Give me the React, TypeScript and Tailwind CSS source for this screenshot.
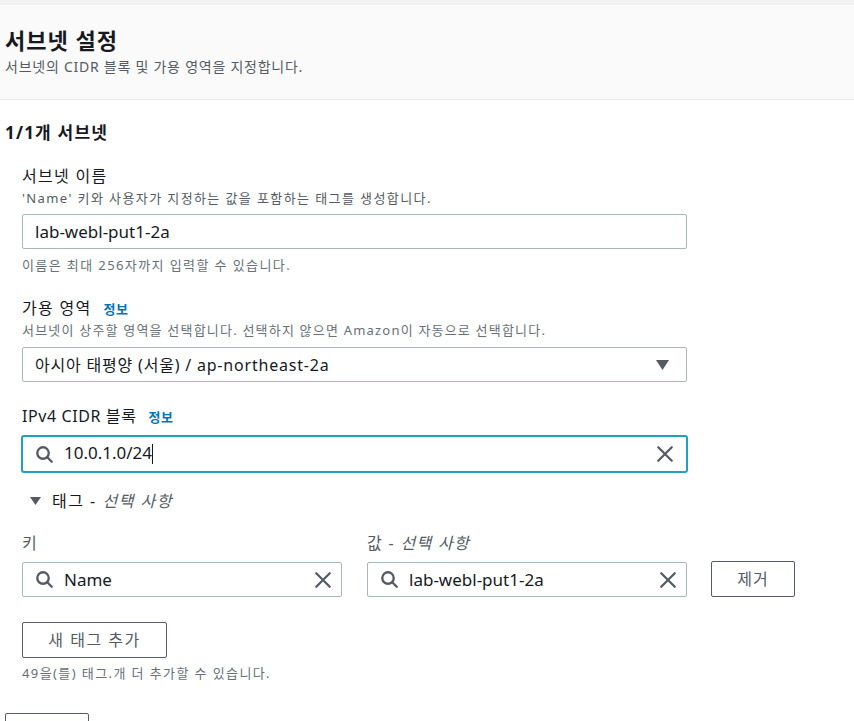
import React, { useState } from 'react';

const font = { fontFamily: '"Noto Sans", "Noto Sans CJK KR", sans-serif' };

function SearchIcon() {
  return (
    <svg width="17" height="17" viewBox="0 0 16 16" fill="none" stroke="#545b64" strokeWidth="2.2" strokeLinecap="round">
      <circle cx="6.6" cy="6.6" r="5.4" />
      <path d="M10.6 10.6 L14.8 14.8" />
    </svg>
  );
}

function ClearIcon() {
  return (
    <svg width="18" height="18" viewBox="0 0 16 16" fill="none" stroke="#545b64" strokeWidth="2" strokeLinecap="round">
      <path d="M2 2 L14 14 M14 2 L2 14" />
    </svg>
  );
}

function InfoLink() {
  return <span className="ml-[12px] text-[13px] tracking-[0.5px] font-bold text-[#0073bb]">정보</span>;
}

function SearchInput({ value, focused = false, className = '' }: { value: string; focused?: boolean; className?: string }) {
  return (
    <div
      className={`flex items-center bg-white ${
        focused
          ? 'rounded-[3px] border-2 border-[#1ea1c7] h-[38px] pl-[13px] pr-[12px]'
          : 'rounded-[2px] border border-[#aab7b8] h-[35px] pl-[13px] pr-[9px]'
      } ${className}`}
    >
      <SearchIcon />
      <span className="ml-[11px] flex-1 text-[17px] text-[#16191f] leading-none">
        {value}
        {focused && <span className="inline-block w-px h-[20px] align-middle bg-[#16191f]" />}
      </span>
      <ClearIcon />
    </div>
  );
}

export default function App() {
  const [tags] = useState([{ key: 'Name', value: 'lab-webl-put1-2a' }]);

  return (
    <div className="min-h-[721px] bg-white text-[#16191f]" style={font}>
      <div className="h-[5px] bg-[#f2f2f2]" />

      {/* Section header */}
      <div className="bg-[#fafafa] border-b border-[#e4e6e6] h-[95px] pl-[5px] pt-[21px]">
        <h1 className="text-[22px] tracking-[1px] font-bold leading-[28px]">서브넷 설정</h1>
        <p className="text-[14px] tracking-[0.75px] text-[#545b64] leading-[20px] mt-[3px]">서브넷의 CIDR 블록 및 가용 영역을 지정합니다.</p>
      </div>

      <div className="pl-[5px] pt-[21px]">
        <h2 className="text-[17px] tracking-[1.2px] font-bold leading-[24px]">1/1개 서브넷</h2>

        <div className="pl-[17px]">
          {/* Subnet name */}
          <div className="mt-[20px] w-[665px]">
            <div className="text-[16px] tracking-[1.3px] leading-[22px]">서브넷 이름</div>
            <div className="text-[13px] tracking-[1.4px] text-[#545b64] leading-[18px] mt-[2px]">'Name' 키와 사용자가 지정하는 값을 포함하는 태그를 생성합니다.</div>
            <div className="mt-[7px] h-[35px] border border-[#aab7b8] rounded-[2px] flex items-center pl-[12px] text-[17px]">lab-webl-put1-2a</div>
            <div className="text-[13px] tracking-[1.4px] text-[#687078] leading-[18px] mt-[7px]">이름은 최대 256자까지 입력할 수 있습니다.</div>
          </div>

          {/* Availability zone */}
          <div className="mt-[23px] w-[665px]">
            <div className="text-[16px] tracking-[1.3px] leading-[22px] flex items-baseline">가용 영역<InfoLink /></div>
            <div className="text-[13px] tracking-[1.2px] text-[#687078] leading-[18px] mt-[1px]">서브넷이 상주할 영역을 선택합니다. 선택하지 않으면 Amazon이 자동으로 선택합니다.</div>
            <div className="mt-[8px] h-[35px] border border-[#aab7b8] rounded-[2px] flex items-center pl-[12px] pr-[17px]">
              <span className="flex-1 text-[16px] tracking-[0.8px]">아시아 태평양 (서울) / ap-northeast-2a</span>
              <svg width="13" height="10" viewBox="0 0 13 10">
                <path d="M0 0 H13 L6.5 10 Z" fill="#545b64" />
              </svg>
            </div>
          </div>

          {/* CIDR block */}
          <div className="mt-[23px] w-[665px]">
            <div className="text-[16px] tracking-[0.6px] leading-[22px] flex items-baseline">IPv4 CIDR 블록<InfoLink /></div>
            <SearchInput value="10.0.1.0/24" focused className="mt-[7px] -mx-px" />
          </div>

          {/* Tags */}
          <div className="mt-[17px] flex items-center pl-[8px] text-[16px] tracking-[1.5px] leading-[22px]">
            <svg width="11" height="8" viewBox="0 0 11 8" className="mr-[11px]">
              <path d="M0 0 H11 L5.5 8 Z" fill="#545b64" />
            </svg>
            <span>
              태그 - <i className="text-[#545b64]">선택 사항</i>
            </span>
          </div>

          <div className="mt-[20px]">
            {tags.map((t) => (
              <div key={t.key} className="flex">
                <div className="w-[320px] shrink-0">
                  <div className="text-[16px] leading-[22px] text-[#545b64]">키</div>
                  <SearchInput value={t.key} className="mt-[8px]" />
                </div>
                <div className="w-[320px] shrink-0 ml-[25px]">
                  <div className="text-[16px] tracking-[1.3px] leading-[22px] text-[#545b64]">
                    값 - <i>선택 사항</i>
                  </div>
                  <SearchInput value={t.value} className="mt-[8px]" />
                </div>
                <div className="ml-[24px] pt-[29px] shrink-0">
                  <button className="w-[84px] h-[36px] border border-[#545b64] rounded-[2px] text-[16px] tracking-[1px] text-[#545b64] bg-white">제거</button>
                </div>
              </div>
            ))}
          </div>

          <button className="mt-[25px] w-[145px] h-[36px] border border-[#545b64] rounded-[2px] text-[16px] tracking-[1.5px] text-[#545b64] bg-white">새 태그 추가</button>
          <div className="text-[13px] tracking-[1.4px] text-[#687078] leading-[18px] mt-[6px]">49을(를) 태그.개 더 추가할 수 있습니다.</div>
        </div>

        <div className="mt-[31px] w-[84px] h-[36px] border border-[#545b64] rounded-[2px] bg-white" />
      </div>
    </div>
  );
}
